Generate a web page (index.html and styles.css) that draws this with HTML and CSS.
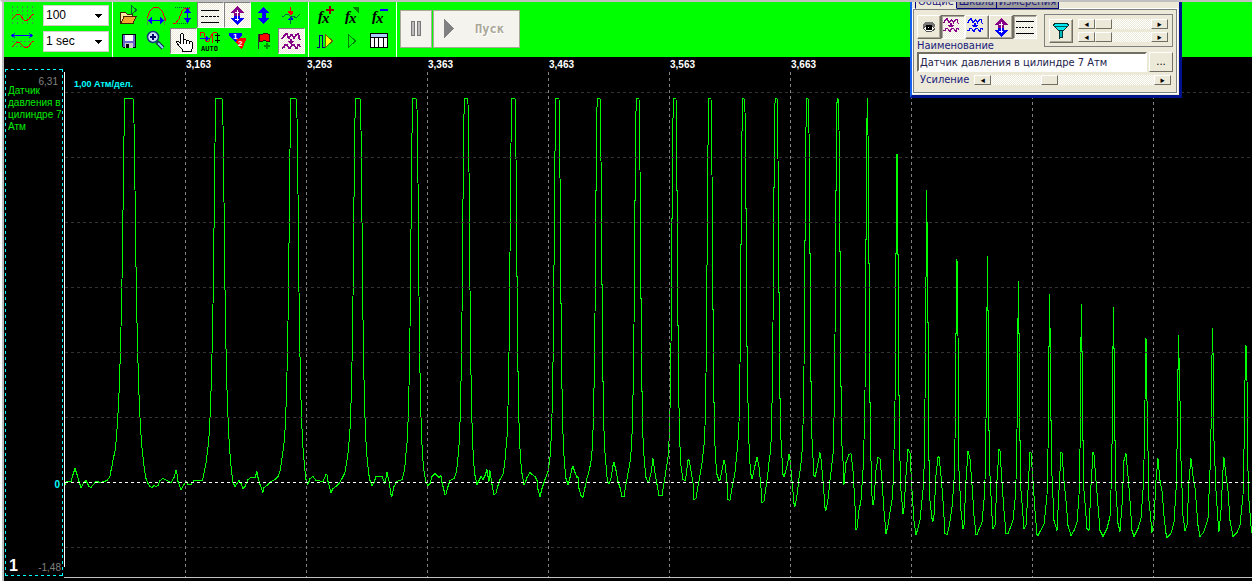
FILE: index.html
```html
<!DOCTYPE html>
<html lang="ru">
<head>
<meta charset="utf-8">
<meta name="viewport" content="width=device-width, initial-scale=1">
<title>Осциллограф</title>
<link rel="stylesheet" href="styles.css">
</head>
<body>
<div class="app">
  <header class="toolbar">
    <div class="scales">
      <svg class="icon" viewBox="0 0 26 26" aria-hidden="true"><path d="M3.500 4v20M8.500 4v20M13.500 4v20M18.500 4v20M23.500 4v20" class="s-gray dash"/><path d="M3 16h1l3-3 2-1 2 1 4 5 2 1 3-2 3-4 2-1" class="s-red"/></svg>
      <span class="pick"><select aria-label="Масштаб"><option>100</option></select><svg class="caret" viewBox="0 0 7 4" aria-hidden="true"><path d="M0 0h7L3.500 4z"/></svg></span>
      <svg class="icon" viewBox="0 0 26 26" aria-hidden="true"><path d="M3 7.500h20M6 5l-3 2.500L6 10M20 5l3 2.500L20 10" class="s-blue"/><path d="M3 13.500h20M3 18.500h20" class="s-gray dash"/><path d="M3 18h1l3-3 2-1 2 1 4 4 2 1 3-2 3-4 2-1" class="s-red"/></svg>
      <span class="pick"><select aria-label="Развёртка"><option>1 sec</option></select><svg class="caret" viewBox="0 0 7 4" aria-hidden="true"><path d="M0 0h7L3.500 4z"/></svg></span>
    </div>
    <div class="tools">
      <button class="tool" aria-label="Открыть"><svg class="icon" viewBox="0 0 26 26"><path d="M4.500 21V10.500h5l2 2h5v9z" fill="#ffe9a0" stroke="#420"/><path d="M5 21.500l3-7h12l-3 7z" fill="#f0a830" stroke="#420"/><path d="M15.500 3.500v9l5-4.500z" fill="none" stroke="#063"/></svg></button>
      <button class="tool" aria-label="Период"><svg class="icon" viewBox="0 0 26 26"><path d="M4 19V16l3-7 3-3 3-1 3 1 3 3 3 7v3" class="s-red"/><path d="M4.500 16v7M21.500 16v7" class="s-gray"/><path d="M7 18.500h12" stroke="#00f"/><path d="M9 15v7l-4-3.500zM17 15v7l4-3.500z" fill="#00f"/></svg></button>
      <button class="tool" aria-label="Амплитуда"><svg class="icon" viewBox="0 0 26 26"><path d="M3 21.500h16M5 5.500h16" stroke="#063" stroke-dasharray="1 1"/><path d="M3 21h3l3-4 3-8 3-3h5" class="s-red"/><path d="M17.500 9v9" stroke="#00f"/><path d="M14 11h7l-3.500-5zM14 16h7l-3.500 5z" fill="#00f"/></svg></button>
      <button class="tool on" aria-label="Сетка"><svg class="icon" viewBox="0 0 26 26"><path d="M4 8.500h18M4 20.500h18" stroke="#000"/><path d="M4 14.500h18" stroke="#000" stroke-dasharray="3 1"/></svg></button>
      <button class="tool on" aria-label="По вертикали"><svg class="icon" viewBox="0 0 26 26"><path d="M13 4l7 7h-4v3H10v-3H6z" fill="#808"/><path d="M13 23l7-7h-4v-2H10v2H6z" fill="#00f"/><path d="M13 8v11M11 10h4M11 17h4" stroke="#fff"/></svg></button>
      <button class="tool" aria-label="Сместить"><svg class="icon" viewBox="0 0 26 26"><path d="M12.500 5l6 6h-4v5h4l-6 6-6-6h4v-5h-4z" fill="#00f"/></svg></button>
      <button class="tool" aria-label="Нулевая линия"><svg class="icon" viewBox="0 0 26 26"><path d="M4 14h2l2-2 2 0 2 2h3l3 2 2-2 2-2" fill="none" stroke="#064"/><path d="M12.500 5v8" class="s-red"/><path d="M10 9h5v2l-2 2h-1l-2-2z" fill="#f00"/><path d="M10 18h5v-1l-2-2h-1l-2 2z" fill="#00f"/><path d="M12.500 15v7" stroke="#064"/></svg></button>

      <button class="tool" aria-label="Сохранить"><svg class="icon" viewBox="0 0 26 26"><path d="M6.500 6.500h13v13h-12l-1-1z" fill="#66c" stroke="#000"/><path d="M9 7h8v6H9z" fill="#fff"/><path d="M9 15h8v5H9z" fill="#ccc"/><path d="M10 16h3v4h-3z" fill="#000"/></svg></button>
      <button class="tool" aria-label="Увеличить"><svg class="icon smooth" viewBox="0 0 26 26"><path d="M14 14l6 6" stroke="#124" stroke-width="4"/><path d="M15 15l5 5" stroke="#8cf" stroke-width="2"/><circle cx="10" cy="9" r="5.500" fill="#cfe4ff" stroke="#13367c" stroke-width="1.500"/><path d="M10 6v6M7 9h6" stroke="#006" stroke-width="2"/></svg></button>
      <button class="tool on" aria-label="Рука"><svg class="icon" viewBox="0 0 26 26"><path d="M10.500 15.500v-9l1-1h1l1 1v5h2l1 1h2l1 1h2l1 1v5l-1 3v1h-9v-2l-3-3-3-4v-1h2z" fill="#fff" stroke="#000"/><path d="M13.500 12v4M16.500 13v3M19.500 14v2" stroke="#000"/></svg></button>
      <button class="tool" aria-label="Автоматически"><svg class="icon" viewBox="0 0 26 26"><path d="M3 8l1-4h2l1 1 1 4 1 4h3l1-3 2-4" class="s-red"/><path d="M15 15l1-10 1-1h3" class="s-red"/><path d="M3 10.500h7" stroke="#00f"/><path d="M9 8v5l4-2.500z" fill="#00f"/><path d="M20.500 5v10M18 7.500h5M18 12.500h5" stroke="#000"/><text x="4" y="23" class="tiny">AUTO</text></svg></button>
      <button class="tool" aria-label="Маркеры"><svg class="icon" viewBox="0 0 26 26"><path d="M9 10h13v2l-4 9h-1z" fill="#f00"/><path d="M5 5h13v2l-6 7h-1L5 7z" fill="#00f"/><path d="M12 11h10l-5 9z" fill="#f00"/><text x="9" y="11" class="digit">1</text><text x="14" y="18" class="digit">2</text></svg></button>
      <button class="tool" aria-label="Добавить флаг"><svg class="icon" viewBox="0 0 26 26"><path d="M7.500 6v15" stroke="#333"/><path d="M8.500 6.500h3l1-1h4l1 1h1v7h-3l-1-1h-2l-1 1h-3z" fill="#f00" stroke="#311"/><path d="M16 15v6M13 18h6" stroke="#080" stroke-width="2"/></svg></button>
      <button class="tool on" aria-label="Каналы"><svg class="icon" viewBox="0 0 26 26"><use href="#waves" class="purple"/></svg></button>
    </div>
    <div class="tools formulas">
      <button class="tool" aria-label="Добавить формулу"><svg class="icon" viewBox="0 0 26 26"><text x="6" y="19" class="fx">f</text><text x="10" y="21" class="fx">x</text><path d="M18 4v8M14 8h8" stroke="#900000" stroke-width="2"/></svg></button>
      <button class="tool" aria-label="Изменить формулу"><svg class="icon" viewBox="0 0 26 26"><text x="6" y="19" class="fx">f</text><text x="10" y="21" class="fx">x</text><path d="M13 5h7v7z" fill="#008000"/></svg></button>
      <button class="tool" aria-label="Удалить формулу"><svg class="icon" viewBox="0 0 26 26"><text x="6" y="19" class="fx">f</text><text x="10" y="21" class="fx">x</text><path d="M14 8h8" stroke="#00f" stroke-width="2"/></svg></button>
      <button class="tool" aria-label="Импульс"><svg class="icon" viewBox="0 0 26 26"><path d="M5 19.500h2.500v-12h3v12H13" fill="none" stroke="#007"/><path d="M13.500 6.500v13l7-6.500z" fill="#ff0" stroke="#660"/></svg></button>
      <button class="tool" aria-label="Воспроизвести"><svg class="icon" viewBox="0 0 26 26"><path d="M9.500 6.500v13l7-6.500z" fill="none" stroke="#008000"/></svg></button>
      <button class="tool" aria-label="Таблица"><svg class="icon" viewBox="0 0 26 26"><path d="M4.500 5.500h17v14h-17z" fill="#fff" stroke="#000"/><path d="M5 6h16v3H5z" fill="#acf"/><path d="M4 9.500h18M8.500 10v9M12.500 10v9M17.500 10v9" stroke="#000"/></svg></button>
    </div>
    <div class="run">
      <button class="big pause" aria-label="Пауза" disabled><svg viewBox="0 0 12 16" width="12" height="16"><path d="M1.500 .5h3v14h-3zM7.500 .5h3v14h-3z" fill="#bbb" stroke="#777"/></svg></button>
      <button class="big start" disabled><svg viewBox="0 0 11 20" width="11" height="20"><path d="M0 0v19l10-9.500z" fill="#808080"/></svg><span>Пуск</span></button>
    </div>
  </header>

  <main class="scope">
    <aside class="channel">
      <span class="limit top">6,31</span>
      <span class="name">Датчик давления в цилиндре 7 Атм</span>
      <span class="zero">0</span>
      <span class="foot"><b class="number">1</b><span class="limit">-1,48</span></span>
    </aside>
    <section class="plot">
      <div class="times"><span>3,163</span><span>3,263</span><span>3,363</span><span>3,463</span><span>3,563</span><span>3,663</span></div>
      <p class="unit">1,00 Атм/дел.</p>
      <svg class="chart" role="img" aria-label="Давление в цилиндре">
        <g transform="translate(-64 -57)">
          <polyline class="trace" transform="translate(0 .5)" points="65,484 67,481 71,481 73,474 75,468 77,474 79,481 81,487 84,482 86,480 89,486 91,487 96,481 101,482 107,480 110,476 111,470 112,466 113,460 114,455 115,451 116,442 117,429 118,413 119,393 120,364 121,327 122,279 123,211 124,136 125,98 133,98 134,122 135,189 136,266 137,322 138,362 139,394 140,417 141,434 142,447 143,456 144,465 145,472 146,478 148,483 150,486 152,487 154,485 156,486 158,485 160,480 163,478 167,480 171,482 174,477 176,470 177,473 178,481 181,489 184,484 186,481 188,484 191,484 194,480 202,480
          203,478 204,473 205,468 206,463 207,455 208,447 209,436 210,417 211,391 212,354 213,304 214,229 215,143 216,98 222,98 223,124 224,201 225,289 226,348 227,389 228,417 229,438 230,453 231,465 232,474 233,482 235,486 237,483 239,480 241,483 243,488 245,486 248,479 251,477 255,477 257,471 258,477 260,484 263,492 264,487 267,485 271,481 275,479 278,476
          280,471 281,465 282,458 283,451 284,443 285,430 286,407 287,372 288,321 289,244 290,149 291,98 296,98 297,117 298,193 299,291 300,356 301,399 302,428 303,447 304,459 305,470 306,479 308,484 310,478 313,476 316,480 323,481 326,474 327,474 328,481 331,492 333,488 336,486 339,483 342,478 345,472
          346,466 347,460 348,453 349,442 350,429 351,403 352,362 353,297 354,198 355,118 356,98 360,98 361,129 362,221 363,319 364,379 365,417 366,441 367,456 368,466 369,475 370,480 372,485 374,482 376,476 382,476 385,483 387,472 389,480 391,494 392,496 394,486 397,481 402,479
          404,472 405,465 406,453 407,443 408,422 409,386 410,328 411,230 412,133 413,98 416,98 417,108 418,182 419,295 420,372 421,417 422,444 423,460 424,470 426,482 428,485 430,483 432,476 435,473 439,477 441,475 442,482 445,494 446,494 448,486 450,480 454,478 456,473
          457,467 458,457 459,445 460,422 461,382 462,313 463,200 464,114 465,98 467,98 468,103 469,171 470,289 471,374 472,422 473,449 474,465 475,475 477,484 479,480 481,476 483,479 485,475 487,469 488,476 489,481 490,470 492,484 494,494 496,493 498,485 500,479 503,474
          504,468 505,460 506,448 507,437 508,406 509,353 510,253 511,143 512,98 515,98 516,158 517,276 518,371 519,422 520,448 521,463 522,473 524,484 525,483 527,477 530,472 532,474 535,476 537,480 538,489 540,496 542,488 545,479 548,471
          549,465 550,457 551,441 552,414 553,363 554,266 555,151 556,98 559,98 560,177 561,303 562,388 563,433 564,455 565,468 566,478 568,484 570,477 572,468 573,466 575,472 577,477 578,476 579,488 581,495 583,497 585,487 587,478 589,471 590,466
          591,461 592,451 593,430 594,389 595,314 596,191 597,107 598,98 600,98 601,160 602,284 603,381 604,430 605,452 606,464 607,476 608,482 609,483 611,478 613,465 614,462 616,470 618,481 620,487 622,496 624,496 626,484 628,473
          630,462 631,452 632,434 633,396 634,325 635,201 636,111 637,98 639,98 640,169 641,298 642,391 643,437 644,455 645,467 646,477 648,482 649,481 651,473 653,458 655,472 657,484 659,495 662,495 664,483 666,470
          668,457 669,441 670,408 671,344 672,219 673,118 674,98 676,98 677,190 678,325 679,407 680,446 681,465 683,479 685,480 686,476 688,460 689,459 691,470 693,482 694,499 696,498 698,486 700,475
          702,463 704,445 705,426 706,374 707,266 708,145 709,98 711,98 712,174 713,309 714,402 715,445 716,463 717,474 719,480 720,479 722,470 724,460 725,463 727,481 728,499 730,500 732,488 735,472
          736,462 737,452 738,440 739,422 740,365 741,245 742,131 743,98 744,98 745,111 746,208 747,346 748,402 749,443 750,463 751,474 752,478 753,475 755,465 757,457 759,466 761,487 762,502 764,501 766,487 768,472
          769,462 770,455 771,442 772,404 773,323 774,188 775,103 776,98 777,98 778,158 779,292 780,398 781,439 782,457 783,474 784,476 786,470 788,461 789,454 790,459 792,480 794,503 795,506 797,495 799,478 801,463
          802,452 803,425 804,367 805,241 806,127 807,98 808,98 809,132 810,253 811,381 812,438 813,457 814,475 815,476 817,468 820,452 821,458 823,480 825,507 826,510 828,499 830,480
          833,454 834,419 835,335 836,191 837,102 838,98 839,129 840,251 841,386 842,445 843,460 844,484 846,462 849,454 851,453 853,470 855,505 856,529 857,528 859,510 861,500 863,470 864,440
          865,391 866,240 867,118 867.500,98 868,134 869,263 870,402 871,460 872,495 873,504 874,500 876,470 878,457 880,458 882,480 884,510 886,533 888,525 890,512 892,500 893,485
          894,450 895,403 896,254 897,154 898,254 899,395 900,460 901,490 903,513 904,508 906,475 908,449 910,452 912,490 914,520 916,534 918,528 920,520 922,500 923,490
          924,470 925,400 926,279 926.500,190 927,220 928,322 929,460 930,500 932,518 933,521 934,515 936,475 938,457 939,456 941,475 943,500 945,533 947,534 949,527 952,507 954,480
          955,440 956,334 957,259 958,335 959,470 961,510 963,528 964,525 966,480 968,451 970,458 972,484 974,515 976,534 977,534 979,529 982,522 984,500
          985,480 986,420 987,308 987.500,256 988,310 989,430 990,475 992,515 993,528 995,525 997,480 999,449 1000,450 1002,482 1004,510 1006,533 1008,533 1010,528 1013,520 1015,500
          1016,480 1017,430 1018,319 1018.500,281 1019,333 1020,440 1021,490 1024,528 1026,525 1028,490 1030,452 1031,452 1033,480 1035,510 1037,534 1038,535 1040,531 1044,524 1047,495
          1048,450 1049,347 1049.500,294 1050,328 1051,420 1052,475 1054,520 1057,530 1059,490 1061,452 1062,452 1064,480 1066,500 1068,525 1071,535 1074,530 1077,522 1079,495
          1080,450 1081,338 1081.500,304 1082,351 1083,440 1084,490 1087,528 1089,530 1091,485 1093,452 1094,454 1096,480 1098,505 1100,530 1103,536 1107,528 1110,516 1111,490
          1112,445 1113,347 1113.500,307 1114,348 1115,440 1116,490 1118,523 1120,531 1122,505 1124,460 1126,453 1128,475 1130,500 1132,530 1134,536 1138,528 1141,518 1143,490
          1144,460 1145,400 1146,338 1147,400 1148,450 1149,500 1152,532 1154,520 1156,480 1158,458 1160,480 1162,490 1164,515 1166,533 1167,537 1171,533 1174,522 1176,490
          1177,450 1178,370 1178.500,335 1180,400 1181,460 1183,515 1185,530 1187,525 1189,480 1191,458 1193,475 1195,487 1198,525 1200,536 1204,531 1208,518 1210,470
          1211,430 1212,355 1212.500,328 1213,350 1214,440 1216,490 1218,520 1219,531 1221,510 1223,470 1224,457 1226,475 1228,490 1230,520 1233,536 1237,532 1240,525 1243,495 1244,450
          1245,380 1246,345 1247,380 1248,470 1249,500 1251,525 1252,532"/>
          <path class="rows" d="M65 92.500H9000M65 157.500H9000M65 222.500H9000M65 287.500H9000M65 352.500H9000M65 417.500H9000M65 547.500H9000"/>
          <path class="cols" d="M185.500 72V577M306.500 72V577M427.500 72V577M548.500 72V577M669.500 72V577M790.500 72V577M911.500 72V577M1032.500 72V577M1153.500 72V577"/>
          <path class="base" d="M65 482.500H9000"/>
          <path class="axis" d="M64.500 72V567"/>
          <path class="floor" d="M64 577.500H9000"/>
        </g>
      </svg>
    </section>
  </main>

  <form class="dialog">
    <div class="tabs"><button type="button" class="tab active">Общие</button><button type="button" class="tab">Шкала</button><button type="button" class="tab">Измерения</button></div>
    <div class="panel">
      <div class="options">
        <div class="keys">
          <button type="button" class="key" aria-label="Видимость"><svg viewBox="0 0 22 22"><path d="M5 8l3-2h6l3 2v3h-2l-1-1H8l-2 1H5z" fill="#777"/><path d="M5 12l3-2h6l3 3-3 2H8z" fill="#fff" stroke="#555"/><path d="M8 9h6v5H8z" fill="#000"/><path d="M10 11h1v1h-1z" fill="#fff"/></svg></button>
          <button type="button" class="key on" aria-label="Каналы"><svg viewBox="2 2 22 22"><use href="#waves" class="purple"/></svg></button>
          <button type="button" class="key" aria-label="Каналы отдельно"><svg viewBox="2 2 22 22"><use href="#waves" class="blue"/></svg></button>
          <button type="button" class="key" aria-label="По вертикали"><svg viewBox="2 2 22 22"><path d="M13 4l7 7h-4v3H10v-3H6z" fill="#808"/><path d="M13 23l7-7h-4v-2H10v2H6z" fill="#00f"/><path d="M13 8v11M11 10h4M11 17h4" stroke="#fff"/></svg></button>
          <button type="button" class="key on" aria-label="Сетка"><svg viewBox="0 0 22 22"><path d="M2 5.500h18M2 17.500h18" stroke="#000"/><path d="M2 11.500h18" stroke="#000" stroke-dasharray="2 1"/></svg></button>
        </div>
        <div class="filter">
          <button type="button" class="key" aria-label="Фильтр"><svg viewBox="0 0 22 22"><path d="M3.500 4.500l2-1h11l2 1v1l-5 5h-5l-5-5z" fill="#00e8f0" stroke="#033"/><path d="M5 6h12" stroke="#055"/><path d="M9.500 10v8l3-1v-7z" fill="#0bb" stroke="#033"/></svg></button>
          <div class="sliders">
            <div class="slider"><button type="button" aria-label="Меньше">◂</button><input type="range" aria-label="Нижняя частота" value="0"><button type="button" aria-label="Больше">▸</button></div>
            <div class="slider"><button type="button" aria-label="Меньше">◂</button><input type="range" aria-label="Верхняя частота" value="0"><button type="button" aria-label="Больше">▸</button></div>
          </div>
        </div>
      </div>
      <label class="caption" for="title">Наименование</label>
      <div class="field"><input id="title" type="text" value="Датчик давления в цилиндре 7 Атм"><button type="button" class="more">...</button></div>
      <div class="gain"><label for="gain">Усиление</label><div class="slider"><button type="button" aria-label="Меньше">◂</button><input id="gain" type="range" value="34"><button type="button" aria-label="Больше">▸</button></div></div>
    </div>
  </form>
</div>
<svg class="defs" aria-hidden="true"><symbol id="waves" viewBox="0 0 26 26"><path d="M4 11l2-3 2-2h1l1 3 1 1 2-3h1l2 3 2-3 2-1 1 2v2l1 2M4 20l2-1 1-2h2l2 3h1l2-3h2l2 3h1l1-3h1l1 2" fill="none" stroke="currentColor" stroke-width="1.500"/><path d="M12 11h2v2h2v1l-3 2-3-2v-1h2z" fill="currentColor"/></symbol></svg>
</body>
</html>
```
FILE: styles.css
```css
* { box-sizing: border-box; }
body { margin: 0; background: #000; font-family: "Liberation Sans", Arial, sans-serif; }
button { margin: 0; padding: 0; border: 0; background: none; color: inherit; font: inherit; }
svg { display: block; shape-rendering: crispEdges; }
.smooth { shape-rendering: auto; }
.defs { position: absolute; width: 0; height: 0; }

.app {
  position: relative;
  display: flex;
  flex-direction: column;
  min-height: 100vh;
  overflow: hidden;
  border-top: 2px solid #c0c0c0;
  border-left: 2px solid #fff;
}
.app > header, .app > main { border-left: 2px solid #c0c0c0; }

.toolbar { display: flex; height: 55px; background: #0f0; }
.scales { display: grid; grid-template-columns: 36px 66px; grid-auto-rows: 26px; align-items: center; justify-items: center; column-gap: 3px; padding-right: 3px; }
.icon { width: 26px; height: 26px; }
.pick { position: relative; width: 66px; height: 21px; }
.pick select {
  appearance: none;
  width: 100%;
  height: 100%;
  padding: 0 2px;
  border: 1px solid #d4d0c8;
  border-radius: 0;
  background: #fff;
  color: #000;
  font: 12px "Liberation Sans", Arial, sans-serif;
}
.caret { position: absolute; right: 7px; top: 9px; width: 7px; height: 4px; }
.tools { display: grid; grid-template-columns: repeat(7, 27px); grid-auto-rows: 26px; padding: 0 3px; border-left: 1px solid #fff; }
.formulas { grid-template-columns: repeat(3, 27px); }
.tool { width: 27px; height: 26px; }
.tool.on, .key.on {
  background: repeating-conic-gradient(#fff 0 25%, #ece9d8 0 50%) 0 0 / 2px 2px;
}
.tool.on { border: solid; border-width: 1px; border-color: #808080 #fff #fff #808080; }
.tool.on .icon { margin: -1px; }
.s-red { fill: none; stroke: #e00; }
.s-blue { fill: none; stroke: #00f; }
.s-gray { fill: none; stroke: #4a8a4a; }
.dash { stroke-dasharray: 2 2; }
.tiny { font: bold 7px "DejaVu Sans Mono", monospace; }
.digit { fill: #fff; font: bold 8px "Liberation Sans", sans-serif; }
.fx { font: italic bold 15px "Liberation Serif", serif; }
.purple { color: #808; }
.blue { color: #00f; }

.run { display: flex; gap: 1px; padding: 8px 3px; border-left: 1px solid #fff; }
.big { display: flex; align-items: center; height: 38px; border: 1px solid #aca899; background: #f4f3ee; }
.pause { justify-content: center; width: 32px; }
.start { gap: 20px; width: 87px; padding-left: 10px; color: #aca899; font: bold 12px "DejaVu Sans Mono", monospace; text-shadow: 1px 1px #fff; }

.scope { display: grid; grid-template-columns: 60px minmax(0, 1fr); flex: 1; }
.channel {
  display: flex;
  flex-direction: column;
  margin: 12px 1px 5px;
  padding: 8px 1px 1px 3px;
  color: #0e0;
  font-size: 10px;
  line-height: 12px;
  background:
    repeating-linear-gradient(90deg, #0ff 0 3px, transparent 3px 6px) 0 0 / 100% 1px no-repeat,
    repeating-linear-gradient(90deg, #0ff 0 3px, transparent 3px 6px) 0 100% / 100% 1px no-repeat,
    repeating-linear-gradient(#0ff 0 3px, transparent 3px 6px) 0 0 / 1px 100% no-repeat,
    repeating-linear-gradient(#0ff 0 3px, transparent 3px 6px) 100% 0 / 1px 100% no-repeat;
}
.limit { color: #808080; }
.top { padding-right: 4px; line-height: 10px; text-align: right; }
.name { margin-top: -2px; }
.zero { margin: auto 0 67px; padding-right: 2px; color: #0ff; font-weight: bold; text-align: right; }
.foot { display: flex; align-items: flex-end; justify-content: space-between; padding: 0 1px 1px; }
.number { color: #fff; font-size: 16px; line-height: 16px; }
.plot { display: grid; grid-template: 14px 26px 1fr / minmax(0, 1fr); }
.times { grid-area: 1 / 1; display: flex; padding-left: 122px; overflow: hidden; color: #fff; font-size: 10px; font-weight: bold; line-height: 16px; }
.times span { flex: 0 0 121px; }
.unit { grid-area: 2 / 1; margin: 0; padding-left: 10px; color: #0ff; font-size: 9px; font-weight: bold; line-height: 26px; }
.chart { grid-area: 1 / 1 / 4 / 2; width: 100%; height: 100%; min-height: 524px; }
.trace { fill: none; stroke: #0f0; stroke-width: 1; }
.rows, .cols, .base { fill: none; stroke-dasharray: 3 3; }
.rows { stroke: #333; }
.cols { stroke: #808080; }
.base, .axis { stroke: #fff; }
.floor { stroke: #c0c0c0; }

.dialog {
  position: absolute;
  top: -13px;
  left: 908px;
  width: 272px;
  padding: 0 2px 2px 1px;
  border: solid;
  border-color: #0831d9 #00138c #00138c #1560ee;
  border-width: 0 3px 3px 2px;
  background: #ece9d8;
  color: #1a1a7c;
  font: 11px/14px "DejaVu Sans Condensed", "DejaVu Sans", sans-serif;
}
.tabs { display: flex; height: 20px; padding-left: 2px; }
.tab { height: 20px; padding: 6px 2px 0; border: solid #00007c; border-width: 0 1px 1px 0; background: #9c9a9a; line-height: 13px; }
.tab.active { padding: 7px 2px 0; border-bottom-color: #ece9d8; border-left-width: 1px; background: #ece9d8; line-height: 12px; }
.panel { padding: 4px 3px 6px 3px; border: 1px solid #808080; box-shadow: 0 0 0 1px #fff; }
.options { display: flex; justify-content: space-between; align-items: flex-start; }
.keys { display: flex; padding-top: 1px; }
.key { width: 24px; height: 24px; border: 1px solid; border-color: #fff #716f64 #716f64 #fff; box-shadow: inset -1px -1px #aca899; }
.key.on { border-color: #716f64 #fff #fff #716f64; box-shadow: inset 1px 1px #aca899; }
.key svg { width: 22px; height: 22px; }
.filter { display: flex; align-items: center; gap: 5px; width: 129px; height: 33px; padding: 0 4px; border: 1px solid #808080; }
.sliders { display: grid; gap: 3px; flex: 1; }
.slider { display: flex; flex: 1; height: 10px; background: repeating-conic-gradient(#fff 0 25%, #ece9d8 0 50%) 0 0 / 2px 2px; }
.slider button { flex: 0 0 17px; height: 10px; border: 1px solid; border-color: #fff #716f64 #716f64 #fff; background: #ece9d8; color: #000; font-size: 9px; line-height: 8px; }
.slider input { appearance: none; flex: 1; min-width: 0; width: 0; height: 10px; margin: 0; background: none; }
.slider input::-webkit-slider-thumb { appearance: none; width: 17px; height: 10px; border: 1px solid; border-color: #fff #716f64 #716f64 #fff; background: #ece9d8; }
.caption { display: block; margin-top: -8px; width: 80px; }
.field { display: flex; gap: 2px; margin-top: -1px; }
.field input { flex: 1; min-width: 0; height: 20px; padding: 0 1px; border: 2px solid; border-color: #716f64 #fff #fff #716f64; background: #fff; color: #22224c; font: inherit; }
.more { width: 24px; height: 20px; border: 1px solid; border-color: #fff #716f64 #716f64 #fff; color: #000; }
.gain { display: flex; align-items: center; gap: 5px; margin-top: 1px; padding: 0 2px 0 3px; line-height: 13px; }
```
